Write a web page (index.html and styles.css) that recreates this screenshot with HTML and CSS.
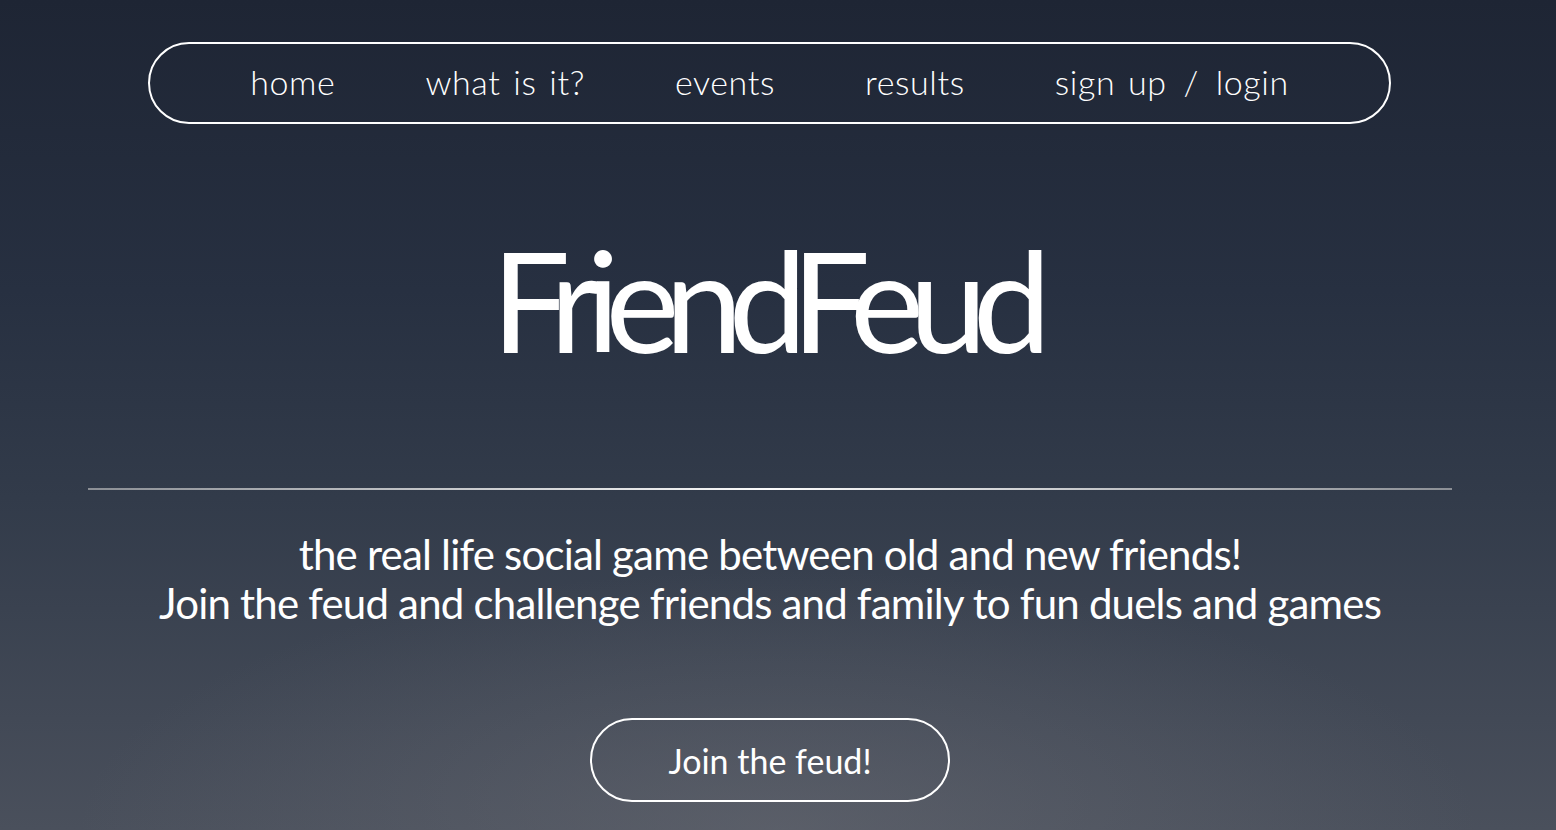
FILE: index.html
```html
<!DOCTYPE html>
<html lang="en">
<head>
<meta charset="utf-8">
<title>FriendFeud</title>
<link rel="stylesheet" href="styles.css">
</head>
<body>
<div class="page">
  <nav class="nav">
    <a class="nav-link" href="#">home</a>
    <a class="nav-link" href="#">what is it?</a>
    <a class="nav-link" href="#">events</a>
    <a class="nav-link" href="#">results</a>
    <a class="nav-link" href="#">sign up <span class="slash">/</span> login</a>
  </nav>
  <header class="hero">
    <h1 class="title">FriendFeud</h1>
    <hr class="divider">
    <p class="tagline">the real life social game between old and new friends!<br>Join the feud and challenge friends and family to fun duels and games</p>
    <a class="cta" href="#">Join the feud!</a>
  </header>
</div>
</body>
</html>
```

FILE: styles.css
```css
html, body {
  margin: 0;
  height: 100%;
}
body {
  background:
    radial-gradient(ellipse 700px 260px at 50% 100%, rgba(110,112,120,0.45), rgba(110,112,120,0) 100%),
    linear-gradient(180deg, #1e2534 0%, #273041 35%, #323b4a 60%, #4a505c 100%);
  color: #fff;
  font-family: Lato, "Open Sans", sans-serif;
  font-weight: 400;
  overflow: hidden;
}
.page {
  box-sizing: border-box;
  width: 1556px;
  height: 830px;
  padding: 42px 16px 0 0;
  display: flex;
  flex-direction: column;
  align-items: center;
}
.nav {
  box-sizing: border-box;
  width: 1243px;
  height: 82px;
  margin-left: -1px;
  border: 2px solid #fff;
  border-radius: 41px;
  display: flex;
  align-items: center;
  justify-content: center;
  gap: 90px;
}
.nav-link {
  color: #fff;
  text-decoration: none;
  font-size: 34px;
  font-weight: 300;
  letter-spacing: 0.6px;
  word-spacing: 3px;
  line-height: 1;
  padding-bottom: 2px;
}
.slash {
  padding: 0 4px;
}
.hero {
  display: flex;
  flex-direction: column;
  align-items: center;
  width: 100%;
}
.title {
  margin: 105px 12px 0 0;
  font-size: 140px;
  font-weight: 400;
  letter-spacing: -14.5px;
  line-height: 1;
  height: 140px;
}
.divider {
  margin: 119px 0 0 0;
  width: 1364px;
  height: 2px;
  border: 0;
  background: linear-gradient(90deg, rgba(200,200,200,0.6), #fafafa 50%, rgba(200,200,200,0.6));
}
.tagline {
  margin: 40px 0 0 0;
  text-align: center;
  font-size: 42px;
  line-height: 49px;
  letter-spacing: -0.8px;
}
.cta {
  box-sizing: border-box;
  margin-top: 90px;
  width: 360px;
  height: 84px;
  border: 2px solid #fff;
  border-radius: 42px;
  display: flex;
  align-items: center;
  justify-content: center;
  color: #fff;
  text-decoration: none;
  font-size: 34px;
}
```
